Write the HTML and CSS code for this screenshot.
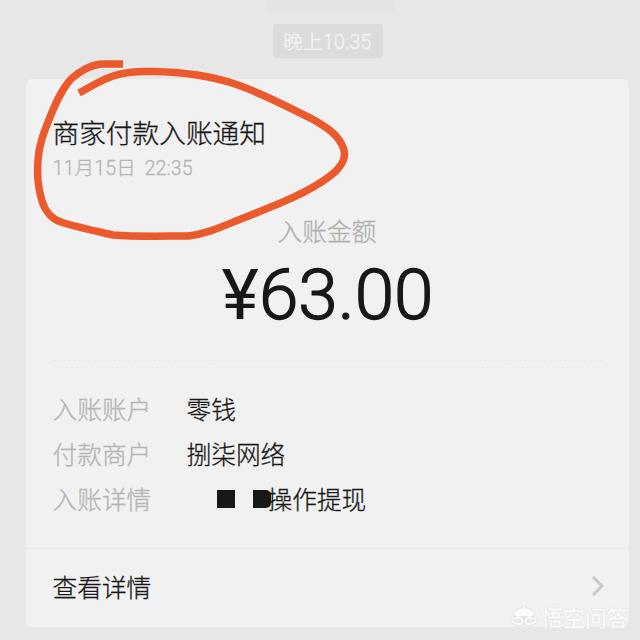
FILE: index.html
```html
<!DOCTYPE html>
<html lang="zh-CN">
<head>
<meta charset="utf-8">
<title>商家付款入账通知</title>
<link rel="stylesheet" href="styles.css">
</head>
<body>
<main class="chat">
  <div class="previous"></div>
  <time class="stamp">晚上10:35</time>
  <article class="card">
    <header class="head">
      <h1 class="title">商家付款入账通知</h1>
      <p class="date">11月15日 22:35</p>
    </header>
    <section class="amount">
      <p class="amount-label">入账金额</p>
      <p class="amount-value"><span class="yen">¥</span>63.00</p>
    </section>
    <dl class="details">
      <div class="row"><dt>入账账户</dt><dd>零钱</dd></div>
      <div class="row"><dt>付款商户</dt><dd>捌柒网络</dd></div>
      <div class="row"><dt>入账详情</dt><dd class="masked"><i class="block"></i><i class="block cut"></i><span>操作提现</span></dd></div>
    </dl>
    <footer class="more">
      <span>查看详情</span>
      <svg class="chevron" width="14" height="22" viewBox="0 0 14 22"><path d="M2 2l9 9-9 9"/></svg>
    </footer>
  </article>
  <svg class="scribble" width="640" height="640" viewBox="0 0 640 640">
    <path d="M123 64H101C91 65 80 71 71 79C61 90 55 105 50 117C44 132 39 144 38 160C37 178 38 187 42 201C45 211 52 219 61 222C76 227 95 231 113 235C138 237 165 236 188 236C208 234 225 225 246 217C274 206 308 193 330 176C343 166 348 155 342 145C337 134 326 127 314 120C290 108 262 93 235 84C208 75 181 72 153 71.500C135 71 124 72 113 76C101 80 90 87 79 93"/>
  </svg>
  <div class="watermark">
    <svg width="28" height="22" viewBox="0 0 28 22"><path class="cap" d="M4 10C5 5 9 4 12 3l2-2 2 2c3 1 7 2 8 7l-4 2-6-1-6 1z"/><path d="M2 13c2 2 5-1 8 0s4 6-1 6c-4 0-7-2-7-4M26 13c-2 2-5-1-8 0s-4 6 1 6c4 0 7-2 7-4"/></svg>
    <span>悟空问答</span>
  </div>
</main>
</body>
</html>
```
FILE: styles.css
```css
* { box-sizing: border-box; margin: 0; padding: 0; }
body {
  width: 640px;
  height: 640px;
  overflow: hidden;
  background: #e7e7e7;
  color: #181818;
  font-family: "Noto Sans CJK SC", sans-serif;
  font-weight: 300;
  -webkit-text-stroke: 0.3px currentColor;
}
.chat {
  position: relative;
  display: flex;
  flex-direction: column;
  align-items: center;
  height: 640px;
}
.previous { width: 128px; height: 12px; margin-left: 22px; background: #e3e3e3; }
.stamp {
  width: 110px;
  height: 34px;
  margin: 12px 0 21px 15px;
  border-radius: 3px;
  background: #dcdcdc;
  color: #f4f4f4;
  font-family: Roboto, "Noto Sans CJK SC", sans-serif;
  font-size: 19.500px;
  letter-spacing: 0.300px;
  line-height: 38px;
  text-align: center;
  white-space: nowrap;
}
.card {
  display: flex;
  flex-direction: column;
  width: 603px;
  height: 548px;
  margin-left: 14px;
  border-radius: 6px;
  background: #f1f1f1;
}
.head { padding: 34px 27px 0; }
.title { font-size: 26.700px; line-height: 38px; font-weight: 300; }
.date {
  height: 30px;
  color: #b5b5b5;
  font-family: Roboto, "Noto Sans CJK SC", sans-serif;
  font-size: 19.500px;
  letter-spacing: 0.200px;
  word-spacing: 3.500px;
  line-height: 36px;
}
.amount { padding-top: 32px; text-align: center; }
.amount-label { color: #b0b0b0; font-size: 24.700px; line-height: 34px; }
.amount-value {
  height: 86px;
  padding-left: 1px;
  font-family: Roboto, sans-serif;
  font-size: 71px;
  line-height: 96px;
  white-space: nowrap;
  -webkit-text-stroke: 1.400px currentColor;
}
.yen { font-weight: 400; -webkit-text-stroke: 0; }
.details {
  margin: 27px 27px 0;
  padding-top: 25px;
  border-top: 1px dashed #e8e8e8;
}
.row { display: flex; height: 45px; font-size: 24.700px; line-height: 45px; }
.row dt { width: 134px; color: #b5b5b5; }
.masked { display: flex; align-items: center; padding-left: 30px; }
.block { width: 18px; height: 18px; margin-right: 18px; background: #181818; }
.cut { margin-right: -3px; border-radius: 0 5px 5px 0; }
.more {
  display: flex;
  align-items: center;
  justify-content: space-between;
  height: 79px;
  margin-top: auto;
  padding: 0 24px 5px 27px;
  border-top: 1px solid #ebebeb;
  font-size: 24.700px;
}
.chevron { fill: none; stroke: #c9c9c9; stroke-width: 3; }
.scribble {
  position: absolute;
  inset: 0;
  fill: none;
  stroke: #ea5a2d;
  stroke-width: 7.500;
  stroke-linejoin: round;
}
.watermark {
  position: absolute;
  right: 11px;
  bottom: 10px;
  display: flex;
  align-items: center;
  gap: 3px;
  color: #fafafa;
  font-size: 22px;
  line-height: 28px;
  font-weight: 400;
  text-shadow: 0 0 2px #cfcfcf;
}
.watermark svg {
  fill: none;
  stroke: #fafafa;
  stroke-width: 2;
  filter: drop-shadow(0 0 1px #cfcfcf);
}
.watermark .cap { fill: #fafafa; stroke: none; }
```
